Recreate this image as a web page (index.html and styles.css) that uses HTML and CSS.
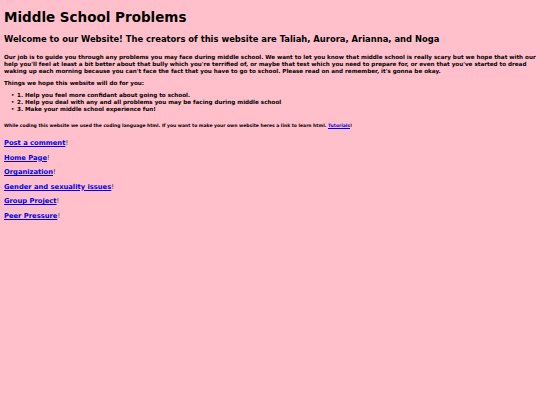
FILE: index.html
```html
<!DOCTYPE html>
<html>
<head>
<meta charset="utf-8">
<link rel="stylesheet" href="styles.css">
</head>
<body>
<h1 class="title">Middle School Problems</h1>
<h2 class="welcome">Welcome to our Website! The creators of this website are Taliah, Aurora, Arianna, and Noga</h2>
<p class="intro">Our job is to guide you through any problems you may face during middle school. We want to let you know that middle school is really scary but we hope that with our help you'll feel at least a bit better about that bully which you're terrified of, or maybe that test which you need to prepare for, or even that you've started to dread waking up each morning because you can't face the fact that you have to go to school. Please read on and remember, it's gonna be okay.</p>
<p class="things">Things we hope this website will do for you:</p>
<ul class="goals">
<li>1. Help you feel more confidant about going to school.</li>
<li>2. Help you deal with any and all problems you may be facing during middle school</li>
<li>3. Make your middle school experience fun!</li>
</ul>
<p class="coding">While coding this website we used the coding language html. If you want to make your own website heres a link to learn html. <a href="#">Tutorials</a>!</p>
<nav class="links">
<p class="link-row"><a href="#">Post a comment</a><span class="bang">!</span></p>
<p class="link-row"><a href="#">Home Page</a><span class="bang">!</span></p>
<p class="link-row"><a href="#">Organization</a><span class="bang">!</span></p>
<p class="link-row"><a href="#">Gender and sexuality issues</a><span class="bang">!</span></p>
<p class="link-row"><a href="#">Group Project</a><span class="bang">!</span></p>
<p class="link-row"><a href="#">Peer Pressure</a><span class="bang">!</span></p>
</nav>
</body>
</html>
```

FILE: styles.css
```css
html, body {
  background: #ffc0cb;
}
body {
  margin: 0;
  padding: 0 4px;
  font-family: "DejaVu Sans", Verdana, sans-serif;
  font-weight: bold;
  color: #000;
}
.title {
  font-size: 13.5px;
  line-height: 16px;
  margin: 9px 0 0;
}
.welcome {
  font-size: 8.4px;
  line-height: 10px;
  margin: 9px 0 0;
}
.intro {
  font-size: 5.63px;
  line-height: 7px;
  margin: 9.5px 0 0;
}
.things {
  font-size: 5.63px;
  line-height: 7px;
  margin: 5px 0 0;
}
.goals {
  font-size: 5.63px;
  line-height: 7px;
  margin: 5px 0 0;
  padding-left: 13px;
  list-style: none;
}
.goals li::before {
  content: "\2022";
  display: inline-block;
  width: 6px;
  margin-left: -6px;
  font-weight: normal;
}
.coding {
  font-size: 4.5px;
  line-height: 6px;
  margin: 10.5px 0 0;
}
.coding a {
  color: #0000ee;
}
.links {
  margin-top: 10px;
}
.link-row {
  font-size: 6.75px;
  line-height: 8px;
  margin: 0 0 6.6px;
}
.link-row a {
  color: #0000ee;
}
.bang {
  font-weight: normal;
  color: #333;
}
```
